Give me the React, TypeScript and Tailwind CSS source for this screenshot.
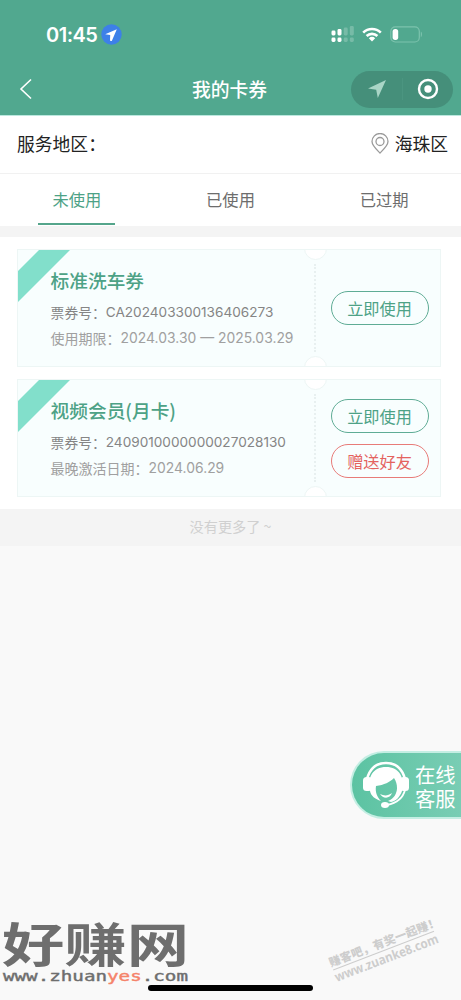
import React from "react";

const coupons = [
  {
    title: "标准洗车券",
    code: "CA202403300136406273",
    dateLabel: "使用期限：",
    date: "2024.03.30 — 2025.03.29",
    gift: false,
  },
  {
    title: "视频会员(月卡)",
    code: "2409010000000027028130",
    dateLabel: "最晚激活日期：",
    date: "2024.06.29",
    gift: true,
  },
];

const StatusBar = () => {
  return (
    <div className="flex h-[63px] items-end justify-between pr-[38px] pb-[18px] pl-[46px]">
      <div className="flex items-center gap-[4px]">
        <span className="font-['Inter',sans-serif] text-[20px] leading-[20px] font-semibold tracking-[-0.5px]">
          01:45
        </span>
        <svg width="21" height="21" viewBox="0 0 21 21">
          <circle cx="10.5" cy="10.5" r="10.2" fill="#3d80e8" />
          <path d="M15.8 5.2 4.2 10.2l5 .9-.2 5.6 1.8.2z" fill="#fff" />
        </svg>
      </div>
      <div className="flex h-[21px] items-center">
        <svg width="24" height="18" viewBox="0 0 24 18" fill="#fff">
          <rect x="0.5" y="4.5" width="4" height="5" rx="1.4" />
          <rect x="6.5" y="3" width="4" height="6.5" rx="1.4" />
          <rect x="0.5" y="11.5" width="4" height="4.5" rx="1.4" />
          <rect x="6.5" y="11.5" width="4" height="4.5" rx="1.4" />
          <g opacity="0.22">
            <rect x="12.7" y="1.5" width="4" height="8" rx="1.4" />
            <rect x="18.8" y="0" width="4" height="9.5" rx="1.4" />
            <rect x="12.7" y="11.5" width="4" height="4.5" rx="1.4" />
            <rect x="18.8" y="11.5" width="4" height="4.5" rx="1.4" />
          </g>
        </svg>
        <svg className="ml-[7px]" width="20" height="15" viewBox="0 0 20 15" fill="none" stroke="#fff" strokeWidth="2.6">
          <path d="M1.2 5.6a12.6 12.6 0 0 1 17.6 0" />
          <path d="M4.6 9a7.8 7.8 0 0 1 10.8 0" />
          <path d="M10 14.5 6.8 11.2a4.7 4.7 0 0 1 6.4 0z" fill="#fff" stroke="none" />
        </svg>
        <svg className="ml-[8px]" width="33" height="17" viewBox="0 0 33 17">
          <rect x="0.8" y="0.8" width="28.5" height="15.2" rx="4.5" fill="none" stroke="#7cc2ad" strokeWidth="1.2" />
          <path d="M30.8 5.6c1.6.6 1.6 5 0 5.6z" fill="#7cc2ad" />
          <rect x="2.6" y="2.9" width="5.6" height="11" rx="2.6" fill="#fff" />
        </svg>
      </div>
    </div>
  );
};

const NavBar = () => {
  return (
    <div className="grid h-[52px] grid-cols-3 items-center">
      <svg className="ml-[19px]" width="14" height="22" viewBox="0 0 14 22" fill="none" stroke="#fff" strokeWidth="1.6">
        <path d="M12 1.5 2 11l10 9.5" />
      </svg>
      <h1 className="pr-[2px] text-center text-[18.8px] leading-6 font-medium">我的卡券</h1>
      <div className="mr-[8px] flex h-[37px] w-[102px] items-center justify-self-end rounded-full bg-[#458f7a]">
        <div className="flex w-[51px] items-center justify-center">
          <svg width="20" height="20" viewBox="0 0 20 20">
            <path d="M19 1 1 9.5l8.2 1.2L10.8 19z" fill="#a9d5c6" />
          </svg>
        </div>
        <div className="h-[22px] w-px bg-[#4b9580]" />
        <div className="flex flex-1 items-center justify-center">
          <svg width="22" height="22" viewBox="0 0 22 22">
            <circle cx="11" cy="11" r="9" fill="none" stroke="#fff" strokeWidth="2.4" />
            <circle cx="11" cy="11" r="3.7" fill="#fff" />
          </svg>
        </div>
      </div>
    </div>
  );
};

const Tabs = () => {
  return (
    <div className="grid h-[52px] grid-cols-3 bg-white text-center text-[16.3px] text-[#6d6d6d]">
      <div className="flex justify-center">
        <div className="h-[51px] w-[77px] border-b-2 border-[#55a58b] leading-[51px] text-[#4da286]">未使用</div>
      </div>
      <div className="leading-[51px]">已使用</div>
      <div className="leading-[51px]">已过期</div>
    </div>
  );
};

const CouponCard = ({ coupon }: { coupon: (typeof coupons)[number] }) => {
  return (
    <div className="relative flex h-[118px] overflow-hidden border border-[#edf6f5] bg-[#f8fefe]">
      <svg className="absolute -top-px -left-px" width="54" height="54" viewBox="0 0 54 54">
        <path d="M23 0h31L0 54V23z" fill="#82dfcb" />
      </svg>
      <div className="w-[296px] pt-[16px] pl-[32.6px]">
        <h2 className="text-[18.7px] leading-7 font-medium text-[#4da286]">{coupon.title}</h2>
        <p className="mt-[5px] flex text-[13.8px] leading-[26px] text-[#858585]">
          票券号：
          <span className="font-['Inter',sans-serif] text-[13.6px]">{coupon.code}</span>
        </p>
        <p className="flex text-[14px] leading-[26px] text-[#a0a0a0]">
          {coupon.dateLabel}
          <span className="font-['Inter',sans-serif] text-[13.9px]">{coupon.date}</span>
        </p>
      </div>
      <div className="my-[14px] border-l-2 border-dotted border-[#e8f0f0]" />
      <div className="flex flex-1 flex-col items-center justify-center gap-[11px] pl-[3px]">
        <button className="h-[34px] w-[98px] rounded-full border-[1.5px] border-[#5fac95] text-[16.2px] leading-[30px] text-[#4da286]">
          立即使用
        </button>
        {coupon.gift && (
          <button className="h-[34px] w-[98px] rounded-full border-[1.5px] border-[#e87b78] text-[16.2px] leading-[30px] text-[#e4635f]">
            赠送好友
          </button>
        )}
      </div>
      <div className="absolute -top-[13px] left-[286px] size-[23px] rounded-full border border-[#edf6f5] bg-white" />
      <div className="absolute -bottom-[13px] left-[286px] size-[23px] rounded-full border border-[#edf6f5] bg-white" />
    </div>
  );
};

const ServiceButton = () => {
  return (
    <div className="absolute top-[751px] right-0 flex h-[68px] w-[111px] items-center rounded-l-full border-2 border-r-0 border-[#c4eee3] bg-linear-to-r from-[#5bc3a2] to-[#79cdb4] pl-[10px] text-white">
      <svg width="48" height="50" viewBox="0 0 48 50" fill="none">
        <path d="M5 19C8 8 15 3 24 3s16 5 19 16" stroke="#fff" strokeWidth="2.6" />
        <path
          d="M8 31C5 17 11 7 24 7s19 10 16 24c-2 6-6 10-11 11l-3-1c6-2 9-8 9-13 0-4-1-7-3-10-4 4-10 7-18 8-1 6 1 11 5 15C13 39 9 36 8 31z"
          fill="#fff"
        />
        <path d="M18 34c4 2 8 2 12-1-2 6-9 6-12 1z" fill="#fff" />
        <rect x="1" y="17" width="9" height="14" rx="3.5" fill="#fff" />
        <rect x="38" y="17" width="9" height="14" rx="3.5" fill="#fff" />
        <path d="M43 30c-2 8-8 13-18 15" stroke="#fff" strokeWidth="1.8" />
        <ellipse cx="23" cy="45" rx="4" ry="3" fill="#fff" />
      </svg>
      <div className="mt-[2px] ml-[5px] w-[42px] text-[20.3px] leading-[24px]">
        <div>在线</div>
        <div>客服</div>
      </div>
    </div>
  );
};

const SiteLogo = () => {
  return (
    <svg className="absolute top-[900px] left-0" width="200" height="90" viewBox="0 0 200 90">
      <text
        x="2"
        y="62"
        textLength="187"
        lengthAdjust="spacingAndGlyphs"
        className="fill-[#6e6e6e] font-['Noto_Sans_CJK_SC',sans-serif] text-[47px] font-bold"
      >
        好赚网
      </text>
      <text
        x="3"
        y="80.5"
        textLength="185"
        lengthAdjust="spacingAndGlyphs"
        className="fill-[#6e6e6e] stroke-[#6e6e6e] stroke-[0.4px] font-['DejaVu_Sans_Mono',monospace] text-[14px]"
      >
        www.zhuan<tspan className="fill-[#f5836a] stroke-[#f5836a]">yes</tspan>.com
      </text>
    </svg>
  );
};

const Stamp = () => {
  return (
    <svg className="absolute top-[910px] left-[321px]" width="140" height="80" viewBox="0 0 140 80">
      <g transform="translate(10 57) rotate(-21)" fill="#cdcdcd">
        <text x="0" y="0" textLength="117" className="font-['Noto_Sans_CJK_SC',sans-serif] text-[11.5px] font-black">
          赚客吧，有奖一起赚！
        </text>
        <rect x="1" y="3" width="108" height="1" />
        <text x="0" y="16" textLength="110" lengthAdjust="spacingAndGlyphs" className="font-['Open_Sans',sans-serif] text-[13px] font-bold">
          www.zuanke8.com
        </text>
      </g>
    </svg>
  );
};

const App = () => {
  return (
    <main className="relative h-[1000px] w-[461px] overflow-hidden bg-[#f9f9f9] font-['Noto_Sans_CJK_SC',sans-serif]">
      <header className="h-[116px] border-b border-[#bce8df] bg-[#51a88f] text-white">
        <StatusBar />
        <NavBar />
      </header>
      <section className="flex h-[58px] items-center justify-between border-b border-[#f1f1f1] bg-white pr-[13px] pb-[2px] pl-[17px] text-[17.8px] text-[#222]">
        <span>服务地区：</span>
        <div className="flex items-center gap-[6px]">
          <svg width="18" height="21" viewBox="0 0 18 21" fill="none" stroke="#9a9a9a" strokeWidth="1.3">
            <path d="M9 20C6 17 1 12.5 1 8.5a8 8 0 0 1 16 0C17 12.5 12 17 9 20z" />
            <circle cx="9" cy="8.5" r="4" />
          </svg>
          <span>海珠区</span>
        </div>
      </section>
      <Tabs />
      <section className="border-t-[11px] border-[#f4f4f4] bg-white pt-[12px] pr-[20px] pb-[12px] pl-[17px]">
        <div className="flex flex-col gap-[12px]">
          {coupons.map((coupon) => (
            <CouponCard key={coupon.code} coupon={coupon} />
          ))}
        </div>
      </section>
      <p className="h-[37px] bg-[#f4f4f4] text-center text-[14.2px] leading-[35px] text-[#d0d0d0]">没有更多了 ~</p>
      <ServiceButton />
      <Stamp />
      <SiteLogo />
      <div className="absolute top-[985px] left-[148px] h-[6px] w-[165px] rounded-full bg-black" />
    </main>
  );
};

export default App;
